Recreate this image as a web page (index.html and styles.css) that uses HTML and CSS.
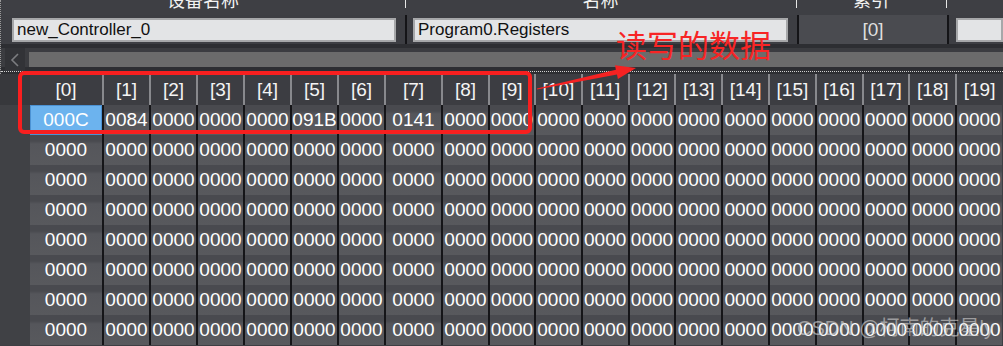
FILE: index.html
```html
<!DOCTYPE html>
<html>
<head>
  <meta charset="UTF-8">
  <title>Program0.Registers</title>
  <link rel="stylesheet" href="styles.css">
</head>
<body>

<div class="top">
  <div class="titles">
    <div class="title"><span>设备名称</span></div>
    <div class="title"><span>名称</span></div>
    <div class="title"><span>索引</span></div>
    <div class="title"></div>
  </div>
  <div class="fields">
    <div class="field"><div class="box">new_Controller_0</div></div>
    <div class="field second"><div class="box">Program0.Registers</div></div>
    <div class="field index">[0]</div>
    <div class="field last"><div class="box"></div></div>
  </div>
  <div class="band"></div>
  <div class="scroller">
    <div class="arrow">
      <svg width="10" height="14" viewBox="0 0 10 14"><path d="M8 1 L2 7 L8 13" fill="none" stroke="#7c7d80" stroke-width="1.6"/></svg>
    </div>
    <div class="track"></div>
  </div>
  <div class="focus"></div>
</div>

<div class="grid" id="grid"></div>

<div class="mark"></div>
<svg class="pointer" width="110" height="36" viewBox="0 0 110 36">
  <polygon points="6.9,28.5 85.9,9.7 85,5.3 106,8 87.9,19 87,14.6 7.1,29.5" fill="#f52222"/>
</svg>
<div class="note">读写的数据</div>
<div class="watermark">CSDN @柯南的克星ly</div>

<script>
  // first row holds the values read back from the controller
  const values = ["000C", "0084", "0000", "0000", "0000", "091B", "0000", "0141", "0000", "0000"];
  const grid = document.getElementById("grid");

  let html = '<div class="gutter head"></div>';
  for (let c = 0; c < 20; c++) {
    html += '<div class="hcell">[' + c + ']</div>';
  }
  for (let r = 0; r < 8; r++) {
    html += '<div class="gutter"></div>';
    for (let c = 0; c < 20; c++) {
      let v = (r === 0 && values[c]) ? values[c] : "0000";
      let cls = (r === 0 && c === 0) ? "cell sel" : "cell";
      html += '<div class="' + cls + '">' + v + '</div>';
    }
  }
  grid.innerHTML = html;
</script>

</body>
</html>
```

FILE: styles.css
```css
body {
  margin: 0;
  padding: 0;
  background: #3d3e43;
  font-family: "Liberation Sans", "Noto Sans CJK SC", sans-serif;
  color: white;
  position: relative;
  overflow: hidden;
  height: 346px;
}

.top {
  border-left: 1px dotted #9a9a9a;
}

.titles {
  display: grid;
  grid-template-columns: 404px 391px 150px 1fr;
  height: 15px;
  background: #3e3f44;
  overflow: hidden;
}
.title {
  text-align: center;
  font-size: 18px;
  line-height: 18px;
  color: #f2f2f2;
}
.title span {
  display: block;
  margin-top: -8px;
}
.title + .title {
  background: linear-gradient(#e6e6e6, #e6e6e6) left top / 1px 8px no-repeat;
}

.fields {
  display: grid;
  grid-template-columns: 404px 392px 150px 1fr;
  height: 29px;
  background: #3d3e43;
}
.field {
  padding: 3px 9px 0 11px;
}
.field + .field {
  border-left: 2px solid #141417;
}
.field.second {
  padding-left: 6px;
}
.field.last {
  padding-left: 7px;
  padding-right: 0;
}
.box {
  height: 24px;
  box-sizing: border-box;
  border: 2px solid #a6a7a9;
  background: #e3e4e6;
  color: #111;
  font-size: 17px;
  line-height: 20px;
  padding-left: 3px;
  white-space: nowrap;
  overflow: hidden;
}
.field.index {
  padding: 0;
  background: #4a4b50;
  text-align: center;
  font-size: 19px;
  line-height: 29px;
  color: #dedede;
}

.band {
  height: 4px;
  background: #2d2e32;
}

.scroller {
  display: flex;
  height: 23px;
  background: linear-gradient(#3b3c40 0, #3b3c40 19px, #2d2e32 19px);
}
.arrow {
  width: 20px;
  margin-left: 4px;
  background: #323337;
  display: flex;
  align-items: center;
  justify-content: center;
}
.track {
  flex: 1;
  height: 15px;
  margin: 4px 0 0 4px;
  background: #6b6b6b;
}

.focus {
  height: 2px;
  background: #2d2e32;
  border-top: 1px dotted #d0d0d0;
}

.grid {
  display: grid;
  grid-template-columns: 30px 72px repeat(6, 47px) 57px 47px 46px repeat(10, 46.8px);
  grid-template-rows: 31px repeat(8, 30px);
  font-size: 19px;
}
.gutter {
  background: #404145;
}
.gutter.head {
  background: #37383c;
}
.hcell, .cell {
  text-align: center;
  white-space: nowrap;
  overflow: hidden;
  box-sizing: border-box;
}
.hcell {
  background: #3c3d42;
  line-height: 31px;
  color: #f4f4f4;
}
.hcell + .hcell {
  border-left: 2px solid #88898d;
}
.cell {
  line-height: 30px;
  background: linear-gradient(#494a4f 0, #494a4f 6px, #55565b 9px, #58595d 30px);
  border-left: 2px solid #151518;
}
.gutter + .cell {
  border-left: none;
}
.cell.sel {
  background: #6cb3ee;
  border: 1px solid #4c92d3;
  line-height: 28px;
}

.mark {
  position: absolute;
  left: 18px;
  top: 71px;
  width: 514px;
  height: 63px;
  box-sizing: border-box;
  border: 4px solid #f81f1f;
  border-radius: 6px;
}
.pointer {
  position: absolute;
  left: 530px;
  top: 60px;
}
.note {
  position: absolute;
  left: 616px;
  top: 27px;
  font-family: "Noto Sans CJK SC", sans-serif;
  font-size: 31px;
  line-height: 34px;
  color: #f72525;
}
.watermark {
  position: absolute;
  left: 797px;
  top: 316px;
  font-size: 20px;
  line-height: 24px;
  color: rgba(215, 215, 215, 0.6);
  white-space: nowrap;
}
```
